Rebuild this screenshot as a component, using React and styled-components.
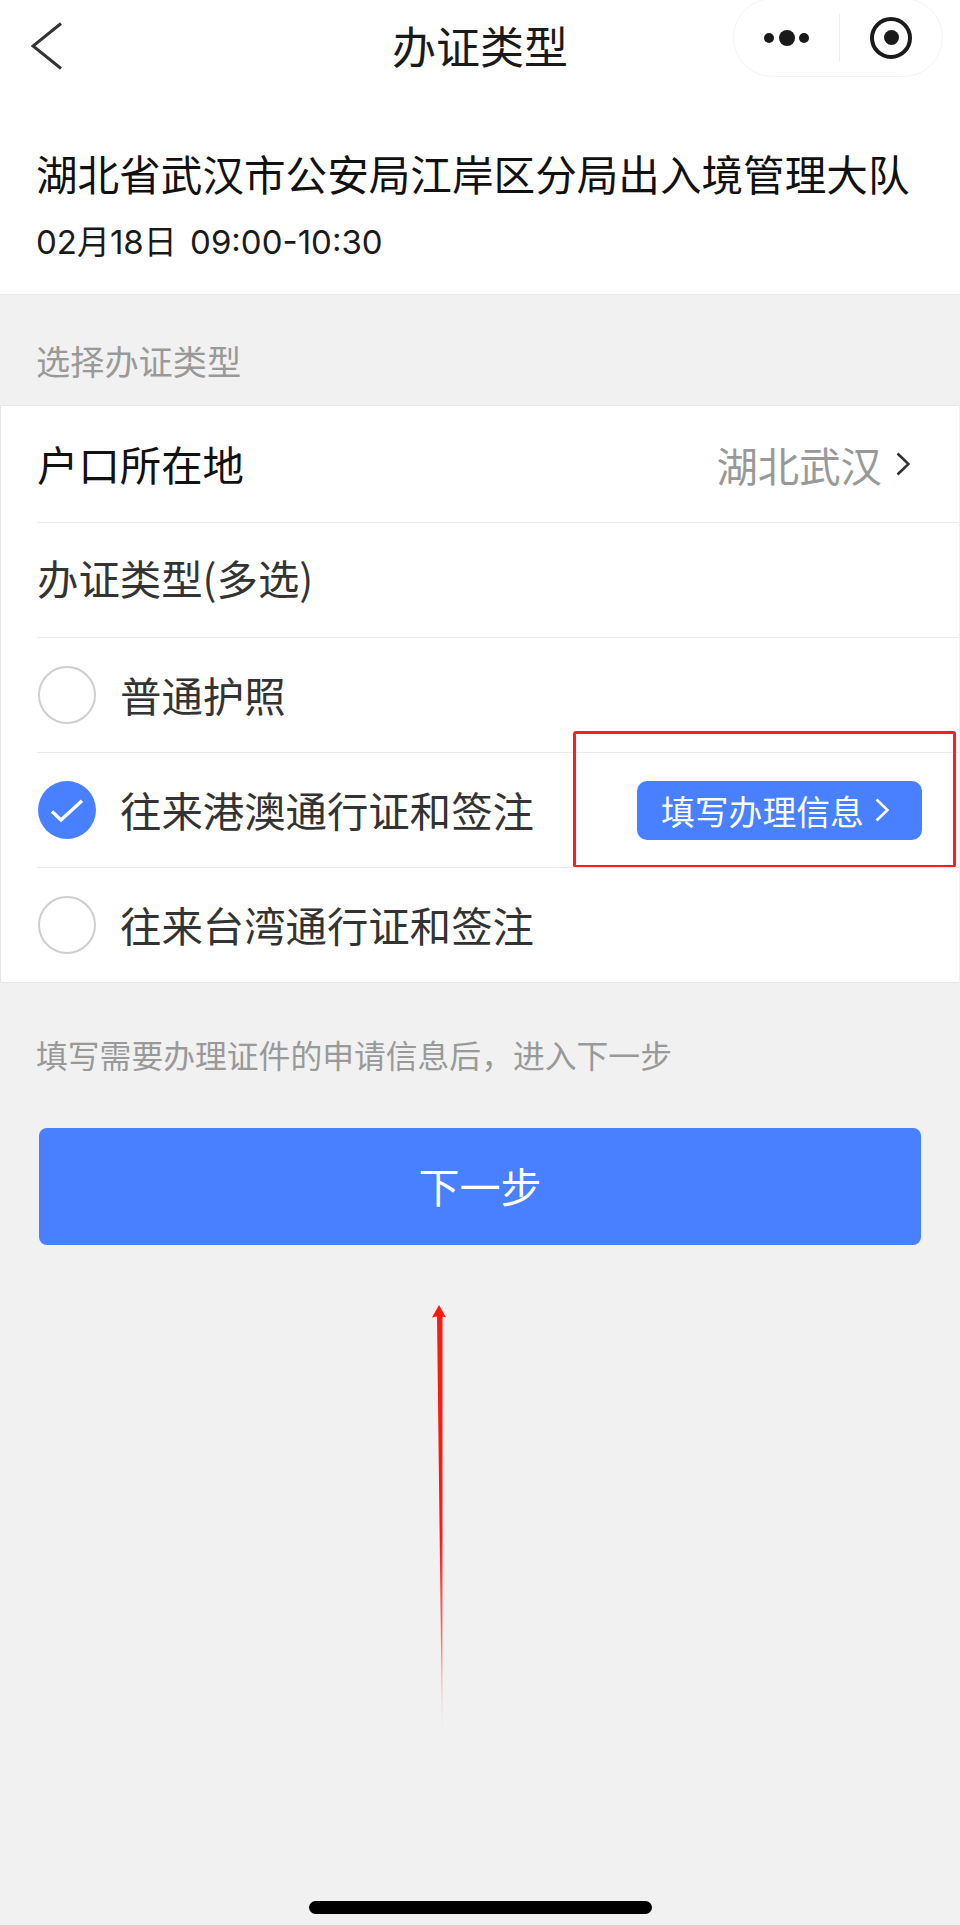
import styled, { createGlobalStyle } from 'styled-components';

const GlobalStyle = createGlobalStyle`
  html, body {
    margin: 0;
    padding: 0;
    background: #f1f1f1;
  }
  * {
    box-sizing: border-box;
  }
`;

const BackIcon = () => (
  <svg width="32" height="48" viewBox="0 0 32 48" fill="none">
    <path d="M30 1.5 L2 24 L30 46.5" stroke="#333" strokeWidth="3" strokeLinejoin="miter" />
  </svg>
);

const Chevron = ({ color = '#333', width = 14, height = 24 }) => (
  <svg width={width} height={height} viewBox="0 0 14 24" fill="none">
    <path d="M1.5 1.5 L12.5 12 L1.5 22.5" stroke={color} strokeWidth="2.6" />
  </svg>
);

const CheckIcon = () => (
  <svg width="58" height="58" viewBox="0 0 58 58" fill="none">
    <path d="M14 30.4 L23 39 L44 19.7" stroke="#fff" strokeWidth="3.4" />
  </svg>
);

const ArrowDrawing = () => (
  <svg width="16" height="426" viewBox="0 0 16 426" fill="none">
    <defs>
      <linearGradient id="tail" x1="0" y1="0" x2="0" y2="1">
        <stop offset="0" stopColor="#ff1a10" />
        <stop offset="0.55" stopColor="#ff1a10" />
        <stop offset="0.78" stopColor="#ff1a10" stopOpacity="0.6" />
        <stop offset="1" stopColor="#ff1a10" stopOpacity="0" />
      </linearGradient>
    </defs>
    <path d="M8 0 L15 12.5 L11.7 11.5 L11.5 12 L11.4 425 L11 425 L6 12 L5.6 11.5 L1 12.5 Z" fill="url(#tail)" />
  </svg>
);

const App = () => {
  return (
    <>
      <GlobalStyle />
      <Page>
        <TopPanel>
          <NavBar>
            <BackButton>
              <BackIcon />
            </BackButton>
            <NavTitle>办证类型</NavTitle>
            <Capsule>
              <MoreDots>
                <Dot $size={10} />
                <Dot $size={16} />
                <Dot $size={10} />
              </MoreDots>
              <CapsuleDivider />
              <TargetRing>
                <TargetCore />
              </TargetRing>
            </Capsule>
          </NavBar>
          <OrgInfo>
            <OrgName>湖北省武汉市公安局江岸区分局出入境管理大队</OrgName>
            <OrgTime>02月18日 09:00-10:30</OrgTime>
          </OrgInfo>
        </TopPanel>

        <SectionLabel>选择办证类型</SectionLabel>

        <Card>
          <Row $first>
            <RowTitle $strong>户口所在地</RowTitle>
            <RowValue>
              湖北武汉
              <Chevron />
            </RowValue>
          </Row>
          <Row>
            <RowTitle $raised>办证类型(多选)</RowTitle>
          </Row>
          <Row>
            <Radio />
            <RowTitle>普通护照</RowTitle>
          </Row>
          <Row>
            <Radio $checked>
              <CheckIcon />
            </Radio>
            <RowTitle>往来港澳通行证和签注</RowTitle>
            <FillButton>
              填写办理信息
              <Chevron color="#fff" />
            </FillButton>
            <Highlight />
          </Row>
          <Row>
            <Radio />
            <RowTitle>往来台湾通行证和签注</RowTitle>
          </Row>
        </Card>

        <Hint>填写需要办理证件的申请信息后，进入下一步</Hint>
        <NextButton>下一步</NextButton>

        <ArrowMark>
          <ArrowDrawing />
        </ArrowMark>
        <HomeBar />
      </Page>
    </>
  );
};

const Page = styled.div`
  position: relative;
  width: 960px;
  height: 1925px;
  display: flex;
  flex-direction: column;
  overflow: hidden;
  background: #f1f1f1;
  font-family: 'Noto Sans CJK SC', 'Noto Sans', sans-serif;
`;

const TopPanel = styled.div`
  height: 295px;
  background: #fff;
  border-bottom: 1px solid #e9e9e9;
`;

const NavBar = styled.div`
  height: 92px;
  display: grid;
  grid-template-columns: 1fr auto 1fr;
  align-items: start;
`;

const BackButton = styled.div`
  padding: 22px 0 0 31px;
  line-height: 0;
`;

const NavTitle = styled.div`
  font-size: 44px;
  line-height: 90px;
  color: #1a1a1a;
`;

const Capsule = styled.div`
  justify-self: end;
  width: 210px;
  height: 79px;
  margin: -2px 17px 0 0;
  padding: 0 30px;
  display: flex;
  align-items: center;
  justify-content: space-between;
  border: 1.5px solid #f3f3f3;
  border-radius: 40px;
  background: #fff;
`;

const MoreDots = styled.div`
  display: flex;
  align-items: center;
  gap: 4.5px;
`;

const Dot = styled.span`
  width: ${(p) => p.$size}px;
  height: ${(p) => p.$size}px;
  border-radius: 50%;
  background: #1a1a1a;
`;

const CapsuleDivider = styled.span`
  width: 1.5px;
  height: 48px;
  background: #eee;
`;

const TargetRing = styled.span`
  width: 42px;
  height: 42px;
  display: flex;
  align-items: center;
  justify-content: center;
  border: 4.5px solid #1a1a1a;
  border-radius: 50%;
`;

const TargetCore = styled.span`
  width: 15px;
  height: 15px;
  border-radius: 50%;
  background: #1a1a1a;
`;

const OrgInfo = styled.div`
  padding: 56px 0 0 36px;
`;

const OrgName = styled.div`
  font-size: 41.6px;
  line-height: 50px;
  white-space: nowrap;
  color: #111;
`;

const OrgTime = styled.div`
  margin-top: 22px;
  font-family: 'Inter', 'Noto Sans CJK SC', sans-serif;
  font-size: 33px;
  line-height: 44px;
  word-spacing: 4px;
  color: #1a1a1a;
`;

const SectionLabel = styled.div`
  height: 110px;
  padding: 46px 0 0 36px;
  font-size: 34.2px;
  line-height: 38px;
  color: #999;
`;

const Card = styled.div`
  background: #fff;
  border: 1px solid #e6e6e6;
  border-right-color: #f0f0f0;
`;

const Row = styled.div`
  position: relative;
  height: ${(p) => (p.$first ? '116px' : '115px')};
  margin-left: 36px;
  padding-right: 37px;
  display: flex;
  align-items: center;
  border-top: ${(p) => (p.$first ? 'none' : '1px solid #ebebeb')};
`;

const RowTitle = styled.div`
  flex: 1;
  padding-bottom: ${(p) => (p.$raised ? '6px' : '2px')};
  font-size: 41.4px;
  line-height: 50px;
  white-space: nowrap;
  color: ${(p) => (p.$strong ? '#111' : '#333')};
`;

const RowValue = styled.div`
  display: flex;
  align-items: center;
  gap: 14px;
  margin-right: 12px;
  font-size: 41.4px;
  line-height: 50px;
  color: #999;
`;

const Radio = styled.div`
  width: 58px;
  height: 58px;
  margin: 0 24px 0 1px;
  flex-shrink: 0;
  border-radius: 50%;
  border: ${(p) => (p.$checked ? 'none' : '2.5px solid #cfcfcf')};
  background: ${(p) => (p.$checked ? '#4880ff' : '#fff')};
  line-height: 0;
`;

const FillButton = styled.div`
  width: 285px;
  height: 59px;
  flex-shrink: 0;
  display: flex;
  align-items: center;
  gap: 11px;
  padding-left: 24px;
  border-radius: 10px;
  background: #4880ff;
  color: #fff;
  font-size: 33.8px;
`;

const Highlight = styled.div`
  position: absolute;
  top: -22px;
  right: 3px;
  width: 383px;
  height: 137px;
  border: 3px solid #ff1e1e;
  border-radius: 3px;
  pointer-events: none;
`;

const Hint = styled.div`
  padding: 50px 0 0 36px;
  font-size: 31.8px;
  line-height: 42px;
  color: #999;
`;

const NextButton = styled.div`
  width: 882px;
  height: 117px;
  margin: 53px 0 0 39px;
  padding-bottom: 4px;
  display: flex;
  align-items: center;
  justify-content: center;
  border-radius: 8px;
  background: #4880ff;
  color: #fff;
  font-size: 41px;
`;

const ArrowMark = styled.div`
  position: absolute;
  left: 431px;
  top: 1305px;
  line-height: 0;
`;

const HomeBar = styled.div`
  width: 343px;
  height: 13px;
  margin: auto 0 11px 309px;
  border-radius: 7px;
  background: #000;
`;

export default App;
